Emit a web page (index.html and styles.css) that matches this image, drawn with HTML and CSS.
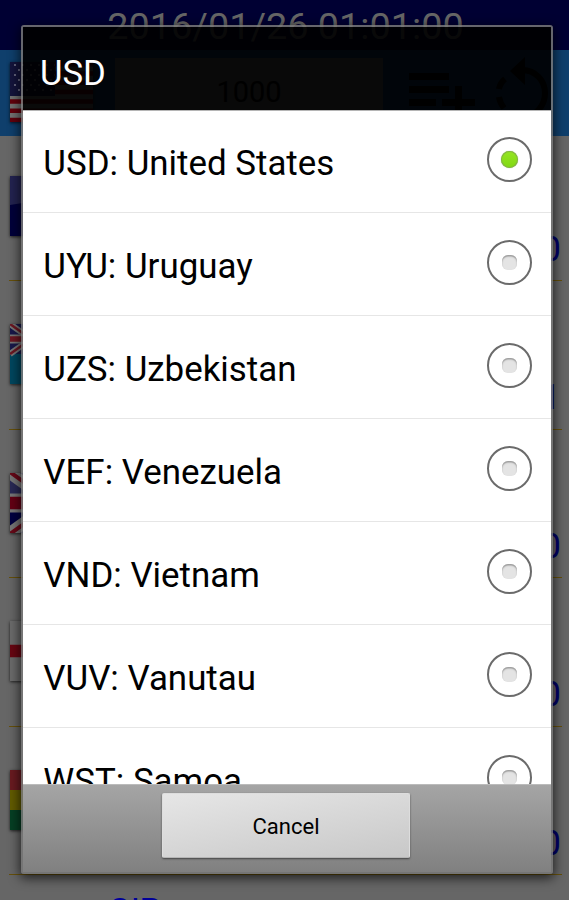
FILE: index.html
```html
<!DOCTYPE html>
<html lang="en">
<head>
<meta charset="utf-8">
<title>Currency</title>
<link rel="stylesheet" href="styles.css">
</head>
<body>
<div class="app">
  <header class="clock">2016/01/26 01:01:00</header>
  <div class="toolbar">
    <svg class="flag base" viewBox="0 0 83 60" preserveAspectRatio="none">
      <rect width="83" height="60" fill="#727272"/>
      <path d="M0 2.3h83M0 11.5h83M0 20.8h83M0 30h83M0 39.5h83M0 48.8h83M0 58h83" stroke="#62000c" stroke-width="4.6"/>
      <path d="M0 0h45v34H0z" fill="#14143c"/>
      <path d="M4 3h41M8 8h37M4 13h41M8 18h37M4 23h41M8 28h37" stroke="#62627c" stroke-width="2" stroke-dasharray="2 6"/>
    </svg>
    <div class="amount">1000</div>
    <svg class="icon add" viewBox="0 0 70 48"><path d="M1 0h40v7H1zM1 13h40v7H1zM1 26h27v7H1zM47 13h7v13h13v7H54v13h-7V33H34v-7h13z"/></svg>
    <svg class="icon rotate" viewBox="0 0 56 76"><path d="M31 0v28L16 14z"/><path d="M28 13C42 13 51 24 51 36S42 60 30 60M11 22Q6 26 5 32M5 40Q6 46 10 51M14 55Q20 60 27 60" fill="none" stroke="#000" stroke-width="6"/></svg>
  </div>
  <div class="rates">
    <div class="rate"><svg class="flag" viewBox="0 0 83 60"><path d="M0 0h83v60H0z" fill="#00003a"/><path d="M0 0h83v16L0 29z" fill="#232350"/></svg><span class="value">0</span></div>
    <div class="rate"><svg class="flag" viewBox="0 0 83 60"><path d="M0 0h83v60H0z" fill="#00475f"/><path d="M0 0h42v30H0z" fill="#18184a"/><path d="M0 0l42 30M42 0L0 30" stroke="#777" stroke-width="6"/><path d="M0 0l42 30M42 0L0 30" stroke="#6c1722" stroke-width="2.5"/><path d="M0 15h42M21 0v30" stroke="#777" stroke-width="9"/><path d="M0 15h42M21 0v30" stroke="#6c1722" stroke-width="5.5"/></svg><span class="value">1</span></div>
    <div class="rate"><svg class="flag" viewBox="0 0 83 60"><path d="M0 0h83v60H0z" fill="#000040"/><path d="M0 8h30v16H0z" fill="#292955"/><path d="M0 0l83 60M83 0L0 60" stroke="#777" stroke-width="12"/><path d="M0-1l83 60M83 1L0 61" stroke="#680918" stroke-width="4"/><path d="M0 30h83M41 0v60" stroke="#777" stroke-width="19"/><path d="M0 30h83M41 0v60" stroke="#640014" stroke-width="12.5"/></svg><span class="value">0</span></div>
    <div class="rate"><svg class="flag" viewBox="0 0 83 60"><path d="M0 0h83v60H0z" fill="#6b6b6b"/><path d="M0 30h83M41 0v60" stroke="#680612" stroke-width="12.5"/></svg><span class="value">0</span></div>
    <div class="rate"><svg class="flag" viewBox="0 0 83 60"><path d="M0 0h83v20H0z" fill="#691b20"/><path d="M0 20h83v20H0z" fill="#625b00"/><path d="M0 40h83v20H0z" fill="#063f24"/></svg><span class="value">0</span></div>
    <div class="rate last"><span class="code">GIP</span></div>
  </div>
</div>

<div class="dialog">
  <h1 class="title">USD</h1>
  <div class="options">
    <div class="option"><span>USD: United States</span><i class="radio on"></i></div>
    <div class="option"><span>UYU: Uruguay</span><i class="radio"></i></div>
    <div class="option"><span>UZS: Uzbekistan</span><i class="radio"></i></div>
    <div class="option"><span>VEF: Venezuela</span><i class="radio"></i></div>
    <div class="option"><span>VND: Vietnam</span><i class="radio"></i></div>
    <div class="option"><span>VUV: Vanutau</span><i class="radio"></i></div>
    <div class="option"><span>WST: Samoa</span><i class="radio"></i></div>
  </div>
  <div class="actions"><button class="cancel">Cancel</button></div>
</div>
</body>
</html>
```
FILE: styles.css
```css
* { box-sizing: border-box; }
body {
  margin: 0;
  height: 900px;
  overflow: hidden;
  position: relative;
  font-family: Roboto, "Liberation Sans", sans-serif;
  background: #666;
}
.app { height: 900px; overflow: hidden; }
.clock {
  height: 50px;
  background: #000033;
  color: #666;
  font-size: 37.8px;
  line-height: 52px;
  padding-left: 2px;
  text-align: center;
  white-space: nowrap;
}
.toolbar {
  height: 86px;
  display: flex;
  align-items: flex-start;
  padding: 0 10px;
  background: #0f3f6c;
}
.flag {
  display: block;
  width: 83px;
  height: 60px;
  box-shadow: 0 1px 3px rgba(0, 0, 0, .7);
}
.base { margin-top: 12px; }
.amount {
  margin: 8px 0 0 22px;
  width: 268px;
  height: 70px;
  background: #626262;
  color: #000;
  font-size: 29px;
  line-height: 68px;
  text-align: center;
}
.icon { flex: none; }
.add { width: 70px; height: 48px; margin: 23px 0 0 25px; }
.rotate { width: 56px; height: 76px; margin: 7px 0 0 16px; }
.rates { margin-top: -3.5px; padding: 0 7px 0 9px; }
.rate {
  height: 148.6px;
  display: flex;
  align-items: flex-start;
  justify-content: space-between;
  padding: 43px 1px 0 1px;
  border-bottom: 1.5px solid #66500a;
}
.value {
  margin-top: 53px;
  color: #00006a;
  font-size: 35px;
  line-height: 41px;
}
.last { border: 0; padding: 15px 0 0 99px; }
.code { color: #000099; font-size: 34px; line-height: 41px; letter-spacing: -.5px; }

.dialog {
  position: absolute;
  left: 21px;
  top: 25px;
  width: 532px;
  height: 849px;
  display: flex;
  flex-direction: column;
  border: 2px solid rgba(120, 120, 120, .85);
  border-radius: 3px;
  box-shadow: 0 3px 12px 1px rgba(0, 0, 0, .7);
}
.title {
  margin: 0;
  flex: none;
  height: 84px;
  padding-left: 17px;
  background: rgba(0, 0, 0, .91);
  border-bottom: 1px solid #b5b5b5;
  color: #fff;
  font-size: 34.7px;
  font-weight: 400;
  line-height: 93px;
}
.options {
  flex: none;
  height: 673px;
  overflow: hidden;
  background: #fff;
}
.option {
  height: 103px;
  display: flex;
  align-items: center;
  justify-content: space-between;
  padding: 0 19.5px 4px 20.3px;
  border-bottom: 1px solid #e6e6e6;
  font-size: 34.9px;
  color: #000;
}
.option:first-child { margin-top: -1px; }
.option span { padding-top: 9px; }
.radio {
  width: 45px;
  height: 45px;
  display: grid;
  place-items: center;
  border: 2px solid #6b6b6b;
  border-radius: 50%;
}
.radio::before {
  content: "";
  width: 15px;
  height: 15px;
  border-radius: 6px;
  background: #e4e4e4;
  box-shadow: inset 0 1.5px 1.5px #999;
}
.radio.on::before {
  width: 17px;
  height: 17px;
  border-radius: 50%;
  background: linear-gradient(#96e524, #80d811);
  box-shadow: inset 0 0 0 1px #83b246, 0 0 1px #999;
}
.actions {
  flex: 1;
  display: flex;
  justify-content: center;
  align-items: flex-start;
  padding: 8px 2px 0 0;
  border-top: 1px solid #bbb;
  background: linear-gradient(#a5a5a5, #808080);
}
.cancel {
  width: 248px;
  height: 65px;
  padding: 1px 0 0;
  border: 1px solid #ddd;
  border-bottom-color: #b5b5b5;
  border-radius: 2px;
  background: linear-gradient(170deg, #e6e6e6, #c8c8c8);
  box-shadow: 0 1px 2px #444;
  color: #000;
  font: 22px Roboto, "Liberation Sans", sans-serif;
}
```
